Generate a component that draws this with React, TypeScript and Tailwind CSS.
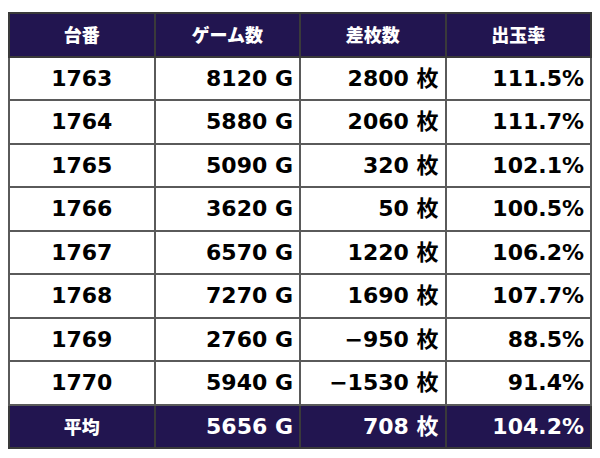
import React from "react";

const rows: [string, string, string, string][] = [
  ["1763", "8120 G", "2800 枚", "111.5%"],
  ["1764", "5880 G", "2060 枚", "111.7%"],
  ["1765", "5090 G", "320 枚", "102.1%"],
  ["1766", "3620 G", "50 枚", "100.5%"],
  ["1767", "6570 G", "1220 枚", "106.2%"],
  ["1768", "7270 G", "1690 枚", "107.7%"],
  ["1769", "2760 G", "−950 枚", "88.5%"],
  ["1770", "5940 G", "−1530 枚", "91.4%"],
];

const font = "font-['DejaVu_Sans','Noto_Sans_CJK_JP',sans-serif]";
const cjk = "font-['Noto_Sans_CJK_JP','DejaVu_Sans',sans-serif]";

export default function App() {
  return (
    <div className="w-[600px] h-[458px] bg-white pt-[12px] pl-[8px]">
      <table className="w-[582px] table-fixed border-collapse border-2 border-[#6a6a6a]">
        <thead>
          <tr className="h-[43.5px] bg-[#221550] text-white">
            {["台番", "ゲーム数", "差枚数", "出玉率"].map((h) => (
              <th
                key={h}
                className={`${cjk} text-[18px] font-black text-center border-2 border-[#3a3a3a] w-[145.5px]`}
              >
                {h}
              </th>
            ))}
          </tr>
        </thead>
        <tbody>
          {rows.map((r) => (
            <tr key={r[0]} className="h-[43.5px] bg-white text-black">
              <td className={`${font} text-[22px] font-bold text-center border-2 border-[#5a5a5a]`}>{r[0]}</td>
              <td className={`${font} text-[22px] font-bold text-right pr-[6px] border-2 border-[#5a5a5a]`}>{r[1]}</td>
              <td className={`${font} text-[22px] font-bold text-right pr-[6px] border-2 border-[#5a5a5a]`}>{r[2]}</td>
              <td className={`${font} text-[22px] font-bold text-right pr-[6px] border-2 border-[#5a5a5a]`}>{r[3]}</td>
            </tr>
          ))}
          <tr className="h-[43.5px] bg-[#221550] text-white">
            <td className={`${cjk} text-[18px] font-black text-center border-2 border-[#3a3a3a]`}>平均</td>
            <td className={`${font} text-[22px] font-bold text-right pr-[6px] border-2 border-[#3a3a3a]`}>5656 G</td>
            <td className={`${font} text-[22px] font-bold text-right pr-[6px] border-2 border-[#3a3a3a]`}>708 枚</td>
            <td className={`${font} text-[22px] font-bold text-right pr-[6px] border-2 border-[#3a3a3a]`}>104.2%</td>
          </tr>
        </tbody>
      </table>
    </div>
  );
}
